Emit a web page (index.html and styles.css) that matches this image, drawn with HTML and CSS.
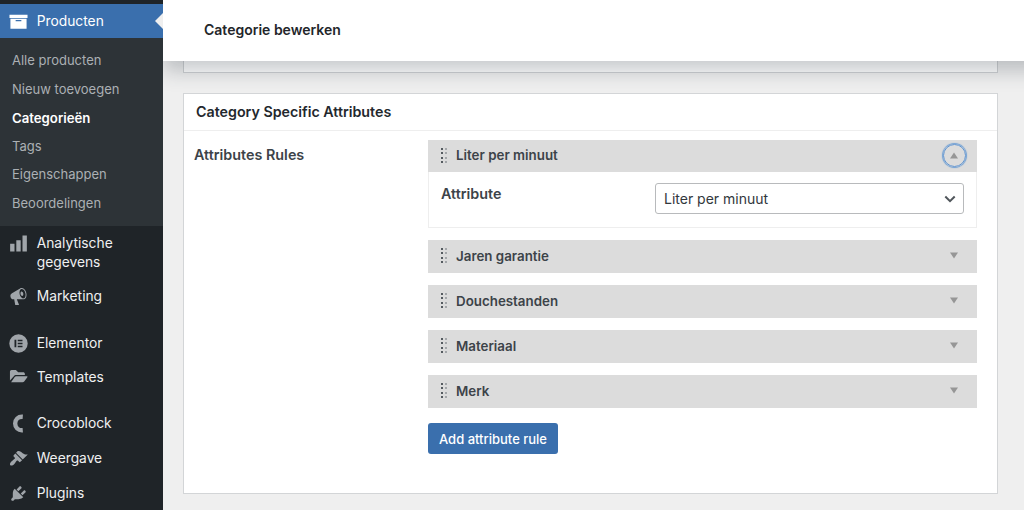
FILE: index.html
```html
<!DOCTYPE html>
<html lang="nl">
<head>
  <meta charset="UTF-8">
  <meta name="viewport" content="width=device-width, initial-scale=1.0">
  <title>Categorie bewerken</title>
  <link rel="stylesheet" href="styles.css">
</head>
<body>

<div class="wrap">
  <!-- Menu -->
  <nav class="sidebar">
    <a class="menu-item current">
      <svg class="icon" viewBox="0 0 20 20"><path d="M.5 3h19v3.200H.5zM1.500 7.200h17v10.300h-17zM7 8.500v1.200h6V8.500z" fill-rule="evenodd"/></svg>
      <span class="label">Producten</span>
    </a>
    <div class="submenu">
      <a>Alle producten</a>
      <a>Nieuw toevoegen</a>
      <a class="active">Categorieën</a>
      <a>Tags</a>
      <a>Eigenschappen</a>
      <a>Beoordelingen</a>
    </div>
    <a class="menu-item">
      <svg class="icon" viewBox="0 0 20 20"><path d="M1.200 10.200h4.600V18.500H1.200zM7.700 6.700h4.600v11.800H7.700zM14.200 1.500h4.600v17h-4.600z"/></svg>
      <span class="label">Analytische<br>gegevens</span>
    </a>
    <a class="menu-item">
      <svg class="icon" viewBox="0 0 20 20"><path d="M18.150 5.940c.46 1.620.38 3.220-.020 4.480-.42 1.280-1.260 2.180-2.300 2.480-.16.060-.26.060-.4.060-.060.020-.12.020-.18.020-.060.020-.14.020-.22.020h-6.800l2.220 5.500c.020.14-.060.260-.14.340-.080.100-.24.160-.34.160H6.950c-.1 0-.26-.060-.34-.160-.080-.080-.16-.200-.14-.340l-1-5.500H4.250l-.020-.020c-.5.060-1.080-.180-1.540-.620s-.88-1.080-1.060-1.880c-.24-.8-.2-1.560-.020-2.200.18-.62.580-1.080 1.060-1.300l.020-.020 9-5.400c.1-.060.18-.1.24-.16.060-.040.140-.080.240-.12.160-.080.280-.12.500-.180 1.040-.3 2.240.1 3.220.980s1.840 2.240 2.260 3.860zm-2.580 5.980h-.020c.4-.1.740-.34 1.040-.7.580-.7.860-1.760.860-3.040 0-.64-.1-1.300-.28-1.980-.34-1.360-1.020-2.500-1.780-3.240s-1.680-1.100-2.460-.88c-.82.22-1.400.96-1.700 2-.32 1.040-.28 2.360.060 3.720.38 1.360 1 2.500 1.800 3.240.78.740 1.620 1.100 2.480.880zm-2.540-7.080c.22-.040.420-.020.620.040.38.160.760.480 1.020 1s.42 1.200.42 1.780c0 .3-.040.560-.12.800-.18.480-.44.840-.86.940-.34.100-.8-.060-1.140-.400s-.64-.860-.78-1.500c-.18-.620-.12-1.240.020-1.720s.48-.840.820-.940z"/></svg>
      <span class="label">Marketing</span>
    </a>
    <div class="separator"></div>
    <a class="menu-item">
      <svg class="icon" viewBox="0 0 20 20"><path d="M10 .3a9.700 9.700 0 1 0 0 19.400a9.700 9.700 0 1 0 0-19.400zM5.800 6h1.900v8H5.800zM9.200 6h5v1.600h-5zM9.200 9.200h5v1.600h-5zM9.200 12.400h5V14h-5z" fill-rule="evenodd"/></svg>
      <span class="label">Elementor</span>
    </a>
    <a class="menu-item">
      <svg class="icon" viewBox="0 0 20 20"><path d="M1 13.200V3.700C1 2.800 1.800 2 2.700 2h4.500l2.500 2.400h5.300c.9 0 1.700.7 1.700 1.600v1.400H7.500c-1 0-1.900.5-2.400 1.300zM2.200 15L6 9.500c.4-.5.900-.8 1.600-.8h11.200c.6 0 .8.500.5 1l-3.300 4.500c-.5.600-1 .8-1.700.8z"/></svg>
      <span class="label">Templates</span>
    </a>
    <div class="separator"></div>
    <a class="menu-item">
      <svg class="icon" viewBox="0 0 20 20"><path class="stroke" d="M14.500 2.900C9.500 2.500 6.500 5.800 6.500 10s3 7.500 8 7.100"/></svg>
      <span class="label">Crocoblock</span>
    </a>
    <a class="menu-item">
      <svg class="icon" viewBox="0 0 20 20"><path d="M14.480 11.060L7.410 3.990l1.500-1.500c.5-.56 2.300-.47 3.510.32 1.210.8 1.430 1.280 2.910 2.100 1.180.64 2.450 1.260 4.450.85zm-.71.71L6.700 4.700 4.930 6.470c-.39.390-.39 1.020 0 1.410l1.060 1.060c.39.390.390 1.030 0 1.420-.6.600-1.430 1.110-2.210 1.690-.35.260-.7.530-1.010.840C1.430 14.230.4 16.080 1.400 17.070c.990 1 2.840-.030 4.180-1.360.31-.310.580-.660.850-1.020.57-.780 1.080-1.610 1.690-2.210.39-.390 1.020-.390 1.410 0l1.060 1.060c.39.390 1.020.390 1.410 0z"/></svg>
      <span class="label">Weergave</span>
    </a>
    <a class="menu-item">
      <svg class="icon" viewBox="0 0 20 20"><path d="M13.110 4.360L9.870 7.600 8 5.730l3.240-3.240c.35-.34 1.050-.2 1.560.320.520.510.660 1.210.310 1.550zm-8 1.770l.910-1.120 9.010 9.010-1.190.840c-.71.710-2.630 1.160-3.820 1.160H6.140L4.900 17.260c-.59.590-1.540.59-2.120 0-.59-.580-.59-1.530 0-2.120l1.240-1.240v-3.880c0-1.130.4-3.190 1.090-3.890zm7.260 3.970l3.240-3.240c.34-.350 1.040-.210 1.550.310.520.510.660 1.210.310 1.550l-3.240 3.250z"/></svg>
      <span class="label">Plugins</span>
    </a>
  </nav>

  <!-- Inhoud -->
  <main class="content">
    <header class="topbar">Categorie bewerken</header>
    <div class="prev-box"></div>

    <section class="postbox">
      <h2>Category Specific Attributes</h2>
      <div class="inside">
        <div class="field-title">Attributes Rules</div>
        <div class="rules">
          <div class="rule">
            <div class="rule-head">
              <span class="grip"></span>Liter per minuut
              <span class="toggle open"><svg viewBox="0 0 8 7"><path d="M4 .5L8 6.500H0z"/></svg></span>
            </div>
            <div class="rule-body">
              <label>Attribute</label>
              <div class="select">Liter per minuut
                <svg viewBox="0 0 12 8"><path d="M1.300 1.500L6 6.200l4.700-4.700"/></svg>
              </div>
            </div>
          </div>
          <div class="rule"><div class="rule-head"><span class="grip"></span>Jaren garantie<span class="toggle"><svg viewBox="0 0 8 7"><path d="M0 .5h8L4 6.500z"/></svg></span></div></div>
          <div class="rule"><div class="rule-head"><span class="grip"></span>Douchestanden<span class="toggle"><svg viewBox="0 0 8 7"><path d="M0 .5h8L4 6.500z"/></svg></span></div></div>
          <div class="rule"><div class="rule-head"><span class="grip"></span>Materiaal<span class="toggle"><svg viewBox="0 0 8 7"><path d="M0 .5h8L4 6.500z"/></svg></span></div></div>
          <div class="rule"><div class="rule-head"><span class="grip"></span>Merk<span class="toggle"><svg viewBox="0 0 8 7"><path d="M0 .5h8L4 6.500z"/></svg></span></div></div>
          <button class="add-btn">Add attribute rule</button>
        </div>
      </div>
    </section>
  </main>
</div>

</body>
</html>
```
FILE: styles.css
```css
* { box-sizing: border-box; }
body {
  margin: 0;
  background: #efefef;
  color: #3c4349;
  font-family: Inter, "Liberation Sans", sans-serif;
  font-size: 14px;
  overflow: hidden;
}
.wrap {
  display: flex;
  height: 510px;
  overflow: hidden;
}

/* menu */
.sidebar {
  position: relative;
  z-index: 1;
  width: 163px;
  flex: none;
  padding-top: 4px;
  background: #1f2428;
}
.menu-item {
  display: flex;
  position: relative;
  height: 34.6px;
  padding: 8px 0 0 9px;
  color: #eff0f1;
  font-size: 13.8px;
  line-height: 18.6px;
}
.submenu + .menu-item { height: 53.4px; }
.menu-item .label { margin-left: 8.700px; }
.icon {
  width: 19px;
  height: 19px;
  flex: none;
  fill: #a0a5aa;
}
.icon .stroke {
  fill: none;
  stroke: #a0a5aa;
  stroke-width: 4.6;
}
.menu-item.current {
  height: 34px;
  background: #3a6fad;
  color: #fff;
}
.current .icon { fill: #fff; }
.current::after {
  content: "";
  position: absolute;
  right: 0;
  top: 9px;
  border: 8px solid transparent;
  border-right-color: #efefef;
  border-left-width: 0;
}
.submenu {
  display: flex;
  flex-direction: column;
  height: 188px;
  padding: 8px 12px;
  background: #2d3337;
  font-size: 13px;
}
.submenu a {
  height: 28.8px;
  line-height: 28.8px;
  color: #abb0b4;
}
.submenu .active {
  color: #fff;
  font-size: 13.2px;
  font-weight: 600;
  line-height: 28px;
}
.separator { height: 11.6px; }

/* inhoud */
.content {
  flex: 1;
  min-width: 0;
}
.topbar {
  position: relative;
  height: 61px;
  margin-right: -30px;
  padding-left: 41px;
  background: #fff;
  color: #23262a;
  font-weight: 600;
  line-height: 59px;
  box-shadow: 0 10px 20px rgba(40, 50, 60, .26);
}
.prev-box {
  width: 815px;
  height: 12px;
  margin-left: 20px;
  border: 1px solid #cfd1d3;
  border-top: 0;
  background: #fff;
}
.postbox {
  width: 815px;
  height: 401px;
  margin: 20px 0 0 20px;
  border: 1px solid #d3d5d7;
  background: #fff;
}
.postbox h2 {
  height: 37px;
  margin: 0;
  padding-left: 12px;
  border-bottom: 1px solid #eee;
  color: #23282d;
  font-size: 14.25px;
  font-weight: 600;
  line-height: 36px;
}
.inside {
  display: flex;
  padding: 9px 20px 0 10px;
}
.field-title {
  width: 234px;
  font-size: 14.35px;
  font-weight: 600;
  line-height: 29px;
}
.rules { flex: 1; }
.rule { margin-bottom: 12px; }
.rule-head {
  display: flex;
  align-items: center;
  height: 33px;
  padding: 0 10px 2px 13px;
  background: #dcdcdc;
  font-size: 13.35px;
  font-weight: 600;
}
.rule-head:not(:last-child) { height: 32px; }
.grip {
  width: 6px;
  height: 15px;
  margin-right: 9px;
  background: linear-gradient(90deg, #555b60 2px, transparent 2px 4px, #a4a7aa 4px);
  -webkit-mask: repeating-linear-gradient(#000 0 2px, transparent 2px 4.300px);
  mask: repeating-linear-gradient(#000 0 2px, transparent 2px 4.300px);
}
.toggle {
  display: flex;
  align-items: center;
  justify-content: center;
  width: 26px;
  height: 26px;
  margin-left: auto;
}
.toggle svg {
  width: 8px;
  height: 7px;
  fill: #969696;
}
.toggle.open {
  width: 23px;
  height: 23px;
  margin-right: 1.500px;
  border: 1px solid #6095d2;
  border-radius: 50%;
  box-shadow: 0 0 1px 1px #6f9fd4;
}
.rule-body {
  display: flex;
  height: 56px;
  padding: 11px 12px;
  border: 1px solid #eee;
  border-top: 0;
}
.rule-body label {
  width: 214px;
  font-size: 14.35px;
  font-weight: 600;
  line-height: 22px;
}
.select {
  display: flex;
  align-items: center;
  justify-content: space-between;
  width: 309px;
  height: 31px;
  padding: 0 7px 0 8px;
  border: 1px solid #b8babc;
  border-radius: 3px;
  color: #32373c;
}
.select svg {
  width: 12px;
  height: 8px;
  fill: none;
  stroke: #50565b;
  stroke-width: 2;
}
.add-btn {
  display: block;
  width: 130px;
  height: 31px;
  margin-top: 15px;
  padding: 0;
  border: 0;
  border-radius: 3px;
  background: #3a6fad;
  color: #fff;
  font: 500 13px Inter, sans-serif;
}
```
